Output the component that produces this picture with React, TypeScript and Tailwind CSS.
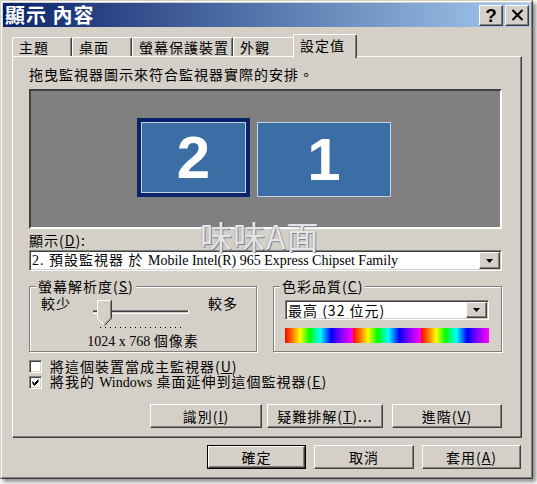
import React from "react";

// classic win9x bevels
const raised =
  "bg-[#d4d0c8] border border-t-white border-l-white border-r-[#404040] border-b-[#404040] shadow-[inset_-1px_-1px_0_#808080]";
const sunken =
  "border border-t-[#808080] border-l-[#808080] border-r-white border-b-white shadow-[inset_1px_1px_0_#404040,inset_-1px_-1px_0_#d4d0c8]";
const serif = "font-['Liberation_Serif','Noto_Sans_CJK_TC',serif] tracking-[0px]";

function Btn({ children, className = "" }: { children: React.ReactNode; className?: string }) {
  return <div className={`${raised} flex items-center justify-center ${className}`}>{children}</div>;
}

function Arrow() {
  return (
    <svg width="7" height="4" viewBox="0 0 7 4">
      <polygon points="0,0 7,0 3.5,4" fill="#000" />
    </svg>
  );
}

function Combo({ children, className = "" }: { children: React.ReactNode; className?: string }) {
  return (
    <div className={`flex bg-white p-[1px] ${sunken} ${className}`}>
      <div className="flex-1 flex items-center pl-[1px] whitespace-nowrap">{children}</div>
      <Btn className="w-[21px]">
        <Arrow />
      </Btn>
    </div>
  );
}

function Group({ title, className = "", children }: { title: React.ReactNode; className?: string; children: React.ReactNode }) {
  return (
    <div className={`relative h-[66px] border border-[#808080] shadow-[inset_1px_1px_0_white,1px_1px_0_white] ${className}`}>
      <span className="absolute -top-[9px] left-[6px] px-[2px] bg-[#d4d0c8] whitespace-nowrap">{title}</span>
      {children}
    </div>
  );
}

function Check({ checked }: { checked?: boolean }) {
  return (
    <div className={`w-[13px] h-[13px] shrink-0 bg-white flex items-center justify-center ${sunken}`}>
      {checked && (
        <svg width="7" height="7" viewBox="0 0 7 7">
          <path d="M0.5 2.5L2.5 4.5L6.5 0.5M0.5 3.5L2.5 5.5L6.5 1.5M0.5 4.5L2.5 6.5L6.5 2.5" stroke="#000" strokeWidth="1" fill="none" />
        </svg>
      )}
    </div>
  );
}

function Slider() {
  return (
    <svg width="100" height="32" viewBox="0 0 100 32" className="mt-[3px]">
      <rect x="3" y="12" width="95" height="1" fill="#808080" />
      <rect x="3" y="13" width="95" height="1" fill="#404040" />
      <rect x="3" y="15" width="96" height="1" fill="#ffffff" />
      <rect x="98" y="12" width="1" height="4" fill="#ffffff" />
      <polygon points="7.5,2.5 21.5,2.5 21.5,20.5 14.5,27.5 7.5,20.5" fill="#d4d0c8" />
      <polyline points="14.5,27 7.5,20.5 7.5,2.5 21,2.5" stroke="#ffffff" fill="none" />
      <polyline points="21.5,2 21.5,20.5 14.5,27.5" stroke="#404040" fill="none" />
      <polyline points="20.5,3.5 20.5,20 14.5,26" stroke="#808080" fill="none" />
      <line x1="10" y1="29.5" x2="93" y2="29.5" stroke="#000" strokeDasharray="1 4" />
    </svg>
  );
}

const rainbow =
  "flex-1 bg-[linear-gradient(90deg,#ff0000,#ff8000_12%,#ffff00_22%,#00ff00_36%,#00ffff_52%,#0000ff_68%,#8000ff_82%,#ff00ff_100%)]";

export default function App() {
  return (
    <div className="relative w-[537px] h-[484px] bg-white font-['Noto_Sans_CJK_TC',sans-serif] text-[14px] leading-[16px] tracking-[1px] text-black">
      <div className="w-[533px] h-[479px] bg-[#d4d0c8] border border-t-[#d4d0c8] border-l-[#d4d0c8] border-r-[#404040] border-b-[#404040] shadow-[3px_3px_4px_rgba(0,0,0,0.45)]">
        <div className="h-full flex flex-col p-[1px] border border-t-white border-l-white border-r-[#808080] border-b-[#808080]">
          {/* title bar */}
          <div className="h-[24px] flex items-center pl-[2px] pr-[1px] bg-[linear-gradient(90deg,#0a246a,#a6caf0)]">
            <span className="text-white font-bold text-[20px] leading-[24px]">顯示 內容</span>
            <div className="ml-auto flex gap-[2px]">
              <Btn className="w-[24px] h-[21px]">
                <span className="font-['Liberation_Sans',sans-serif] font-bold text-[19px] leading-none tracking-[0px]">?</span>
              </Btn>
              <Btn className="w-[24px] h-[21px]">
                <svg width="13" height="12" viewBox="0 0 13 12">
                  <path d="M1.5 1L11.5 11M11.5 1L1.5 11" stroke="#000" strokeWidth="2" />
                </svg>
              </Btn>
            </div>
          </div>

          <div className="flex flex-col pl-[9px] mt-[7px]">
            {/* tabs */}
            <div className="flex items-end h-[22px]">
              <div className="w-[60px] h-[19px] pl-[6px] leading-[18px] border-t border-l border-r border-t-white border-l-white border-r-[#404040] shadow-[inset_-1px_0_0_#808080] rounded-t-[2px]">主題</div>
              <div className="w-[60px] h-[19px] pl-[6px] leading-[18px] border-t border-l border-r border-t-white border-l-white border-r-[#404040] shadow-[inset_-1px_0_0_#808080] rounded-t-[2px]">桌面</div>
              <div className="w-[101px] h-[19px] pl-[6px] leading-[18px] border-t border-l border-r border-t-white border-l-white border-r-[#404040] shadow-[inset_-1px_0_0_#808080] rounded-t-[2px]">螢幕保護裝置</div>
              <div className="w-[62px] h-[19px] pl-[6px] leading-[18px] border-t border-l border-r border-t-white border-l-white border-r-[#404040] shadow-[inset_-1px_0_0_#808080] rounded-t-[2px]">外觀</div>
              <div className="relative z-10 -ml-[2px] -mb-[2px] w-[64px] h-[24px] pl-[6px] leading-[20px] bg-[#d4d0c8] border-t border-l border-r border-t-white border-l-white border-r-[#404040] shadow-[inset_-1px_0_0_#808080] rounded-t-[2px]">設定值</div>
            </div>

            {/* panel */}
            <div className="w-[510px] h-[382px] flex flex-col pl-[16px] pt-[9px] border border-t-white border-l-white border-r-[#404040] border-b-[#404040] shadow-[inset_-1px_-1px_0_#808080]">
              <div>拖曳監視器圖示來符合監視器實際的安排。</div>

              <div className="w-[473px] h-[140px] mt-[7px] flex items-end pl-[106px] pb-[30px] bg-[#808080] border-2 border-t-[#404040] border-l-[#404040] border-r-white border-b-white">
                <div className="w-[113px] h-[79px] border-4 border-[#0a246a]">
                  <div className="h-full flex items-center justify-center bg-[#3a6ea5] border border-[#c6d3e6]">
                    <span className="text-white font-bold text-[60px] leading-none tracking-[0px] font-['Liberation_Sans',sans-serif]">2</span>
                  </div>
                </div>
                <div className="ml-[7px] w-[134px] h-[75px] flex items-center justify-center bg-[#3a6ea5] border border-[#c6d3e6]">
                  <span className="text-white font-bold text-[60px] leading-none tracking-[0px] font-['Liberation_Sans',sans-serif]">1</span>
                </div>
              </div>

              <div className="mt-[3px]">
                顯示(<u>D</u>):
              </div>
              <Combo className="w-[473px] h-[21px] mt-[2px]">
                <span className={serif}>
                  <span className="tracking-[1px]">2. 預設監視器 於 </span>Mobile Intel(R) 965 Express Chipset Family
                </span>
              </Combo>

              <div className="w-[473px] flex mt-[15px]">
                <Group
                  className="w-[228px]"
                  title={
                    <>
                      螢幕解析度(<u>S</u>)
                    </>
                  }
                >
                  <div className="flex items-start pl-[11px] pt-[8px]">
                    <span className="w-[49px]">較少</span>
                    <Slider />
                    <span className="ml-[18px]">較多</span>
                  </div>
                  <div className="mt-[2px] text-center">
                    <span className={serif}>1024 x 768 </span>個像素
                  </div>
                </Group>
                <Group
                  className="w-[229px] ml-auto"
                  title={
                    <>
                      色彩品質(<u>C</u>)
                    </>
                  }
                >
                  <div className="flex flex-col pl-[11px] pt-[13px]">
                    <Combo className="w-[204px] h-[20px]">最高 (32 位元)</Combo>
                    <div className="w-[204px] h-[15px] mt-[8px] flex">
                      <div className={rainbow} />
                      <div className={rainbow} />
                      <div className={rainbow} />
                    </div>
                  </div>
                </Group>
              </div>

              <div className="mt-[6px] h-[16px] flex items-center">
                <Check />
                <span className="ml-[8px] leading-[15px]">
                  將這個裝置當成主監視器(<u>U</u>)
                </span>
              </div>
              <div className="h-[16px] flex items-center">
                <Check checked />
                <span className="ml-[8px] leading-[15px]">
                  將我的 <span className={serif}>Windows</span> 桌面延伸到這個監視器(<u>E</u>)
                </span>
              </div>

              <div className="w-[473px] mt-[14px] flex justify-end">
                <Btn className="w-[112px] h-[24px]">
                  識別(<u>I</u>)
                </Btn>
                <Btn className="w-[116px] h-[24px] ml-[5px]">
                  疑難排解(<u>T</u>)...
                </Btn>
                <Btn className="w-[110px] h-[24px] ml-[9px]">
                  進階(<u>V</u>)
                </Btn>
              </div>
            </div>

            {/* dialog buttons */}
            <div className="w-[510px] mt-[7px] pr-[1px] flex justify-end gap-[8px]">
              <div className="w-[99px] h-[24px] border border-black flex">
                <Btn className="flex-1">確定</Btn>
              </div>
              <Btn className="w-[100px] h-[24px]">取消</Btn>
              <Btn className="w-[99px] h-[24px]">
                套用(<u>A</u>)
              </Btn>
            </div>
          </div>
        </div>
      </div>

      {/* watermark */}
      <span className="absolute left-[200px] top-[219px] text-[32px] leading-[32px] tracking-[1px] text-[#e4e4e4] [text-shadow:1px_1px_0_rgba(90,90,130,0.7),-1px_0_0_rgba(150,150,150,0.5)]">
        味味A面
      </span>
    </div>
  );
}
